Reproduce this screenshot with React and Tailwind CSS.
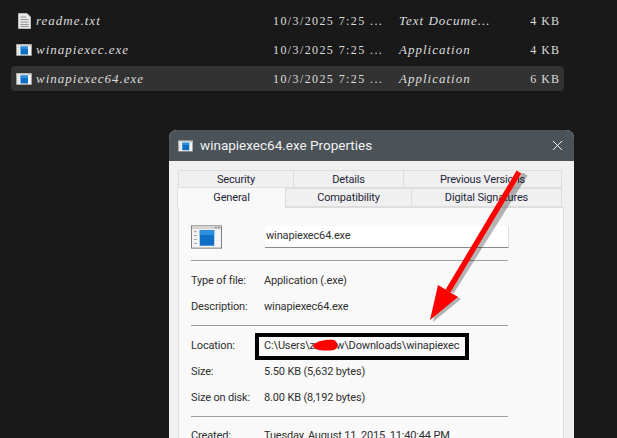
import React from 'react';
import { X } from 'lucide-react';

const files = [
  { name: 'readme.txt', type: 'Text Docume...', size: '4 KB', icon: 'doc' },
  { name: 'winapiexec.exe', type: 'Application', size: '4 KB', icon: 'exe' },
  { name: 'winapiexec64.exe', type: 'Application', size: '6 KB', icon: 'exe', selected: true },
];

const ExeIcon = ({ className }) => (
  <svg viewBox="0 0 32 24" className={className}>
    <rect x="0.5" y="0.5" width="31" height="23" fill="#f4f4f4" stroke="#7d7d7d" />
    <rect x="1" y="1" width="30" height="3" fill="#d5d5d5" />
    <rect x="25" y="1.5" width="1.5" height="1.5" fill="#777" />
    <rect x="28" y="1.5" width="1.5" height="1.5" fill="#777" />
    <rect x="3" y="6" width="3" height="1" fill="#999" />
    <rect x="3" y="10" width="3" height="1" fill="#999" />
    <rect x="3" y="14" width="3" height="1" fill="#999" />
    <rect x="3" y="18" width="3" height="1" fill="#999" />
    <rect x="9" y="5" width="15" height="16" fill="#0f6fc6" />
    <rect x="9" y="5" width="15" height="5" fill="#2b8fe0" />
  </svg>
);

const DocIcon = () => (
  <svg viewBox="0 0 13 16" className="w-[13px] h-[16px]">
    <path d="M0.5 0.5H9L12.5 4V15.5H0.5Z" fill="#e8e8e8" stroke="#bdbdbd" />
    <path d="M2.5 4H8M2.5 6.5H10.5M2.5 9H10.5M2.5 11.5H10.5M2.5 13.5H10.5" stroke="#8a8a8a" strokeWidth="0.9" />
  </svg>
);

const FileRow = ({ file }) => (
  <div className={`flex items-center h-[25px] mt-[4px] pl-[4px] pr-[4px] rounded-sm text-[#dcdcdc] text-[13px] italic tracking-[1px] ${file.selected ? 'bg-[#323232]' : ''}`} style={{ fontFamily: '"Liberation Serif", serif' }}>
    <div className="w-[21px] flex justify-center pr-[3px]">
      {file.icon === 'doc' ? <DocIcon /> : <ExeIcon className="w-[16px] h-[12px]" />}
    </div>
    <span className="w-[237px] whitespace-nowrap">{file.name}</span>
    <span className="w-[126px] whitespace-nowrap tracking-[1.4px] not-italic text-[12px]">10/3/2025 7:25 ...</span>
    <span className="w-[110px] whitespace-nowrap">{file.type}</span>
    <span className="flex-1 text-right whitespace-nowrap tracking-[1px] not-italic text-[12px]">{file.size}</span>
  </div>
);

const Tab = ({ label, className }) => (
  <div className={`flex items-center justify-center border border-[#dedede] ${className}`}>{label}</div>
);

const Field = ({ label, value, className = '' }) => (
  <div className={`flex items-center h-[26px] ${className}`}>
    <span className="w-[73px] text-[#303030]">{label}</span>
    <span className="whitespace-nowrap text-[#303030]">{value}</span>
  </div>
);

const Divider = () => <div className="h-px w-[317px] bg-[#a0a0a0]" />;

export default function App() {
  return (
    <div className="relative w-[617px] h-[438px] overflow-hidden bg-[#191919]">
      <div className="pt-[4px] pl-[11px] w-[564px]">
        {files.map((f) => <FileRow key={f.name} file={f} />)}
      </div>

      {/* Properties window */}
      <div className="ml-[169px] mt-[39px] w-[405px] h-[320px] rounded-t-lg overflow-hidden bg-[#f0f0f0] text-[11px] tracking-[-0.15px]" style={{ fontFamily: 'Roboto, sans-serif' }}>
        <div className="flex items-center h-[31px] bg-[#4b5358] pl-[9px] pr-[8px] text-white">
          <ExeIcon className="w-[15px] h-[12px] mr-[7px]" />
          <span className="text-[13.5px] tracking-normal text-[#f2f2f2] flex-1">winapiexec64.exe Properties</span>
          <X size={17} strokeWidth={1.3} className="text-white" />
        </div>

        <div className="pt-[9px] pl-[9px] text-[#1f1f3a]">
          <div className="flex h-[18px]">
            <Tab label="Security" className="w-[116px] pt-[3px]" />
            <Tab label="Details" className="w-[111px] -ml-px pt-[3px]" />
            <Tab label="Previous Versions" className="w-[159px] -ml-px pt-[3px]" />
          </div>
          <div className="flex h-[19px]">
            <Tab label="General" className="w-[109px] -ml-[1px] -mt-[1px] h-[21px] bg-[#f9f9f9] border-b-0 relative z-10" />
            <Tab label="Compatibility" className="w-[127px] -ml-px pt-[2px]" />
            <Tab label="Digital Signatures" className="w-[151px] -ml-px pt-[2px]" />
          </div>
          <div className="w-[386px] h-[240px] bg-[#f9f9f9] border border-[#dedede] pl-[12px] pt-[16px]">
            <div className="flex items-center h-[25px]">
              <ExeIcon className="w-[31px] h-[24px] mr-[43px]" />
              <div className="w-[244px] h-[22px] bg-white border-b border-[#8a8a8a] border-r border-r-[#e0e0e0] pl-[1px] flex items-center text-[#303030]">winapiexec64.exe</div>
            </div>
            <div className="mt-[11px]"><Divider /></div>
            <div className="mt-[7px]">
              <Field label="Type of file:" value="Application (.exe)" />
              <Field label="Description:" value="winapiexec64.exe" />
            </div>
            <div className="mt-[5px]"><Divider /></div>
            <div className="mt-[7px]">
              <Field label="Location:" value="C:\Users\zxxxxw\Downloads\winapiexec" />
              <Field label="Size:" value="5.50 KB (5,632 bytes)" />
              <Field label="Size on disk:" value="8.00 KB (8,192 bytes)" />
            </div>
            <div className="mt-[5px]"><Divider /></div>
            <div className="mt-[6px]">
              <Field label="Created:" value="Tuesday, August 11, 2015, 11:40:44 PM" />
            </div>
          </div>
        </div>
      </div>

      {/* Annotations drawn on top of the screenshot */}
      <div className="absolute left-[255px] top-[333px] w-[214px] h-[27px] border-4 border-black" />
      <svg className="absolute inset-0 w-[617px] h-[438px] pointer-events-none" viewBox="0 0 617 438">
        <path d="M525 174L451 292" stroke="#000" strokeOpacity="0.28" strokeWidth="6" fill="none" />
        <path d="M433 322L441 287L461 299Z" fill="#000" fillOpacity="0.28" />
        <path d="M519 172L448 291" stroke="#fe0000" strokeWidth="5.5" fill="none" />
        <path d="M430 320L438 285L458 297Z" fill="#fe0000" />
        <path d="M313 346C315 341 326 339 334 340C338 342 339 348 334 350C324 351 315 351 313 346Z" fill="#fe0000" />
      </svg>
    </div>
  );
}
